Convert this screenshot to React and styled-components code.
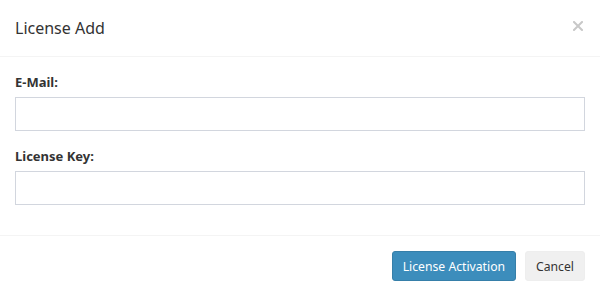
import React from 'react'
import styled, { createGlobalStyle } from 'styled-components'

const GlobalStyle = createGlobalStyle`
  * { box-sizing: border-box; }
  body {
    margin: 0;
    background: #fff;
    font-family: "Noto Sans", "Open Sans", sans-serif;
    font-size: 13px;
    color: #333;
  }
`

const Modal = styled.div`
  width: 600px;
  height: 296px;
  background: #fff;
  display: flex;
  flex-direction: column;
`
const Header = styled.div`
  height: 57px;
  padding: 0 15px;
  border-bottom: 1px solid #f4f4f4;
  display: flex;
  align-items: center;
  justify-content: space-between;
`
const Title = styled.h4`
  margin: 0;
  font-size: 16px;
  font-weight: normal;
  line-height: 26px;
  color: #333;
`
const Close = styled.button`
  border: none;
  background: none;
  padding: 0;
  margin-right: 2px;
  margin-top: -4px;
  width: 10px;
  height: 10px;
  display: flex;
  cursor: pointer;
`
const Body = styled.div`
  padding: 15px 15px 0;
`
const FormGroup = styled.div`
  margin-bottom: 15px;
  display: flex;
  flex-direction: column;
`
const Label = styled.label`
  font-weight: bold;
  font-size: 13px;
  line-height: 20px;
  margin-bottom: 5px;
  color: #333;
`
const Input = styled.input`
  height: 34px;
  width: 100%;
  border: 1px solid #d2d6de;
  padding: 6px 12px;
  font-size: 13px;
  font-family: inherit;
  outline: none;
`
const Footer = styled.div`
  margin-top: 15px;
  border-top: 1px solid #f4f4f4;
  padding: 15px;
  display: flex;
  justify-content: flex-end;
  gap: 9px;
`
const Button = styled.button`
  height: 30px;
  padding: 0 10px;
  border-radius: 3px;
  font-family: inherit;
  font-size: 12.2px;
  cursor: pointer;
  border: 1px solid ${props => props.primary ? '#367fa9' : '#eee'};
  background-color: ${props => props.primary ? '#3c8dbc' : '#f0f0f0'};
  color: ${props => props.primary ? '#fff' : '#333'};
`

const App = () => {
  return (
    <Modal>
      <GlobalStyle />
      <Header>
        <Title>License Add</Title>
        <Close aria-label="Close">
          <svg width="10" height="10" viewBox="0 0 10 10">
            <path d="M1 1L9 9M9 1L1 9" stroke="#c8c8c8" strokeWidth="2" strokeLinecap="square" />
          </svg>
        </Close>
      </Header>
      <Body>
        <FormGroup>
          <Label>E-Mail:</Label>
          <Input type="text" />
        </FormGroup>
        <FormGroup>
          <Label>License Key:</Label>
          <Input type="text" />
        </FormGroup>
      </Body>
      <Footer>
        <Button primary>License Activation</Button>
        <Button>Cancel</Button>
      </Footer>
    </Modal>
  )
}

export default App
